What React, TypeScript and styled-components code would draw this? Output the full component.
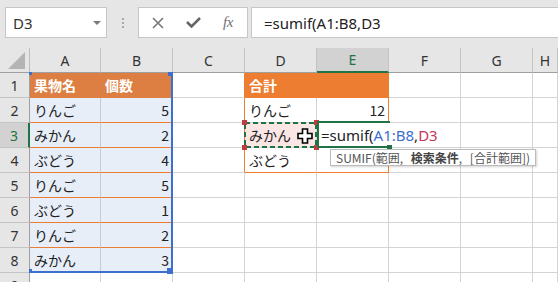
import * as React from 'react'
import styled, {createGlobalStyle} from 'styled-components'

const GREEN = '#217346'
const BLUE = '#3d6fcc'
const RED = '#c23b3f'
const ORANGE = '#ed7d31'
const ORANGE_TINT = '#dd7f42'
const BLUE_TINT = '#e7eef8'
const GRID = '#d4d4d4'
const CHROME = '#e6e6e6'

const GlobalStyle = createGlobalStyle`
  html, body {
    margin: 0;
    padding: 0;
    background: #fff;
  }
  body {
    font-family: 'Noto Sans CJK JP', 'Noto Sans', sans-serif;
  }
`

const Root = styled.div`
  width: 558px;
  height: 282px;
  overflow: hidden;
  background: #fff;
`

// ---- formula bar ----

const Bar = styled.div`
  display: flex;
  align-items: flex-start;
  height: 48px;
  box-sizing: border-box;
  padding: 7px 0 0 5px;
  background: ${CHROME};
`

const NameBox = styled.div`
  display: flex;
  align-items: center;
  justify-content: space-between;
  width: 102px;
  height: 31px;
  box-sizing: border-box;
  padding: 0 5px 0 7px;
  background: #fff;
  border: 1px solid #c6c6c6;
  font: 15px 'Noto Sans', sans-serif;
  color: #333;
`

const Caret = styled.span`
  width: 0;
  height: 0;
  border-left: 4px solid transparent;
  border-right: 4px solid transparent;
  border-top: 4px solid #7a7a7a;
`

const Grip = styled.div`
  display: flex;
  flex-direction: column;
  align-items: center;
  justify-content: center;
  gap: 2px;
  width: 31px;
  height: 31px;

  span {
    width: 2px;
    height: 2px;
    background: #a8a8a8;
  }
`

const Buttons = styled.div`
  display: flex;
  align-items: center;
  gap: 5px;
  width: 110px;
  height: 31px;
  box-sizing: border-box;
  padding-left: 4px;
  background: #fff;
  border: 1px solid #c6c6c6;
`

const IconSlot = styled.span`
  display: flex;
  align-items: center;
  justify-content: center;
  width: 30px;
  height: 29px;
  color: #6e6e6e;
`

const Fx = styled.span`
  font: italic 15px 'Liberation Serif', serif;
  color: #707070;
  letter-spacing: -0.5px;
`

const Input = styled.div`
  flex: 1;
  display: flex;
  align-items: center;
  height: 31px;
  box-sizing: border-box;
  margin-left: 3px;
  padding-left: 12px;
  background: #fff;
  border: 1px solid #c6c6c6;
  border-right: none;
  font: 15px 'Noto Sans', sans-serif;
  color: #222;
`

// ---- sheet ----

const Sheet = styled.div`
  position: relative;
  display: grid;
  grid-template-columns: 30px 71px repeat(6, 72px) 1fr;
  grid-auto-rows: 25px;
`

const Corner = styled.div`
  display: flex;
  align-items: flex-end;
  justify-content: flex-end;
  padding: 0 4px 3px 0;
  background: ${CHROME};
  border-right: 1px solid #bdbdbd;
  border-bottom: 1px solid #9f9f9f;

  &::after {
    content: '';
    border-left: 17px solid transparent;
    border-bottom: 17px solid #b4b4b4;
  }
`

const ColHead = styled.div<{$on?: boolean}>`
  display: flex;
  align-items: center;
  justify-content: center;
  box-sizing: border-box;
  background: ${p => (p.$on ? '#d2d2d2' : CHROME)};
  color: ${p => (p.$on ? GREEN : '#333')};
  border-right: 1px solid #c4c4c4;
  border-bottom: ${p => (p.$on ? `2px solid ${GREEN}` : '1px solid #9f9f9f')};
  font: 14px 'Noto Sans', sans-serif;
`

const RowHead = styled.div<{$on?: boolean}>`
  display: flex;
  align-items: center;
  justify-content: center;
  box-sizing: border-box;
  background: ${p => (p.$on ? '#d2d2d2' : CHROME)};
  color: ${p => (p.$on ? GREEN : '#333')};
  border-right: ${p => (p.$on ? `2px solid ${GREEN}` : '1px solid #9f9f9f')};
  border-bottom: 1px solid #c4c4c4;
  font: 14px 'Noto Sans', sans-serif;
`

const Cell = styled.div<{$fill?: string; $head?: boolean; $num?: boolean; $bb?: string; $br?: string}>`
  display: flex;
  align-items: center;
  justify-content: ${p => (p.$num ? 'flex-end' : 'flex-start')};
  padding: 0 3px 1px 4px;
  box-sizing: border-box;
  overflow: hidden;
  white-space: nowrap;
  background: ${p => p.$fill || '#fff'};
  border-right: 1px solid ${p => p.$br || GRID};
  border-bottom: 1px solid ${p => p.$bb || GRID};
  color: ${p => (p.$head ? '#fff' : '#222')};
  font-weight: ${p => (p.$head ? 700 : 400)};
  font-size: 14px;
`

// ---- overlays ----

const RefRange = styled.div`
  position: absolute;
  left: 29px;
  top: 24px;
  width: 144px;
  height: 201px;
  box-sizing: border-box;
  border-right: 2px solid ${BLUE};
  border-bottom: 2px solid ${BLUE};
  pointer-events: none;
`

const Handle = styled.span<{$c: string; $s: number}>`
  position: absolute;
  width: ${p => p.$s}px;
  height: ${p => p.$s}px;
  background: ${p => p.$c};
`

const Ants = styled.div`
  position: absolute;
  left: 244px;
  top: 74px;
  width: 73px;
  height: 26px;
`

const EditBox = styled.div`
  position: absolute;
  left: 317px;
  top: 73px;
  width: 73px;
  height: 27px;
  box-sizing: border-box;
  display: flex;
  align-items: center;
  padding-left: 2px;
  border-top: 2px solid ${GREEN};
  border-bottom: 2px solid ${GREEN};
  border-left: 2px solid ${GREEN};
  font: 15px 'Noto Sans', sans-serif;
  color: #222;
  white-space: nowrap;
`

const Ref = styled.span<{$c: string}>`
  color: ${p => p.$c};
`

const Cursor = styled.svg`
  position: absolute;
  left: 297px;
  top: 80px;
`

const Tip = styled.div`
  position: absolute;
  left: 330px;
  top: 101px;
  height: 17px;
  box-sizing: border-box;
  padding: 0 5px;
  background: #fff;
  border: 1px solid #bcbcbc;
  box-shadow: 1px 1px 2px rgba(0, 0, 0, 0.18);
  font-size: 12px;
  line-height: 15px;
  color: #555;
  word-spacing: 5px;
  white-space: nowrap;

  b {
    font-weight: 700;
    color: #444;
  }
`

type CellData = {t?: string; fill?: string; head?: boolean; num?: boolean; bb?: string; br?: string}

const cols = ['A', 'B', 'C', 'D', 'E', 'F', 'G', 'H']

const fruits: [string, string][] = [
  ['りんご', '5'],
  ['みかん', '2'],
  ['ぶどう', '4'],
  ['りんご', '5'],
  ['ぶどう', '1'],
  ['りんご', '2'],
  ['みかん', '3'],
]

function buildRows(): CellData[][] {
  const rows: CellData[][] = []
  rows.push([
    {t: '果物名', fill: ORANGE_TINT, head: true, bb: ORANGE_TINT, br: ORANGE_TINT},
    {t: '個数', fill: ORANGE_TINT, head: true, bb: ORANGE_TINT, br: ORANGE_TINT},
    {br: ORANGE},
    {t: '合計', fill: ORANGE, head: true, bb: ORANGE, br: ORANGE},
    {fill: ORANGE, head: true, bb: ORANGE, br: ORANGE},
    {}, {}, {},
  ])
  fruits.forEach(([name, n], i) => {
    const r = i + 2
    const line = r < 8 ? ORANGE : undefined
    const row: CellData[] = [
      {t: name, fill: BLUE_TINT, bb: line, br: '#c7ccd4'},
      {t: n, num: true, fill: BLUE_TINT, bb: line},
      {}, {}, {}, {}, {}, {},
    ]
    if (r <= 4) row[2] = {br: ORANGE}
    if (r === 2) {
      row[3] = {t: 'りんご'}
      row[4] = {t: '12', num: true, br: ORANGE}
    }
    if (r === 3) {
      row[3] = {t: 'みかん', fill: '#fbe6e6'}
      row[4] = {br: '#fff'}
    }
    if (r === 4) {
      row[3] = {t: 'ぶどう', bb: ORANGE}
      row[4] = {bb: ORANGE, br: ORANGE}
    }
    rows.push(row)
  })
  rows.push([{}, {}, {}, {}, {}, {}, {}, {}])
  return rows
}

const rows = buildRows()

export default function App() {
  return (
    <Root>
      <GlobalStyle />
      <Bar>
        <NameBox>
          D3
          <Caret />
        </NameBox>
        <Grip>
          <span />
          <span />
          <span />
        </Grip>
        <Buttons>
          <IconSlot>
            <svg width='12' height='12' viewBox='0 0 12 12'>
              <path d='M1 1 L11 11 M11 1 L1 11' stroke='#777' strokeWidth='1.6' fill='none' />
            </svg>
          </IconSlot>
          <IconSlot>
            <svg width='15' height='11' viewBox='0 0 15 11'>
              <path d='M1 5 L5.5 9.5 L14 1' stroke='#666' strokeWidth='2.6' fill='none' />
            </svg>
          </IconSlot>
          <IconSlot>
            <Fx>fx</Fx>
          </IconSlot>
        </Buttons>
        <Input>=sumif(A1:B8,D3</Input>
      </Bar>

      <Sheet>
        <Corner />
        {cols.map(c => (
          <ColHead key={c} $on={c === 'E'}>{c}</ColHead>
        ))}
        {rows.map((row, ri) => (
          <React.Fragment key={ri}>
            <RowHead $on={ri === 2}>{ri + 1}</RowHead>
            {row.map((c, ci) => (
              <Cell key={ci} $fill={c.fill} $head={c.head} $num={c.num} $bb={c.bb} $br={c.br}>
                {c.t}
              </Cell>
            ))}
          </React.Fragment>
        ))}

        <RefRange>
          <Handle $c={BLUE} $s={3} style={{left: 0, top: 0}} />
          <Handle $c={BLUE} $s={4} style={{right: -1, top: 0}} />
          <Handle $c={BLUE} $s={3} style={{left: 0, bottom: -1}} />
          <Handle $c={BLUE} $s={6} style={{right: -2, bottom: -3}} />
        </RefRange>

        <Ants>
          <svg width='73' height='26' viewBox='0 0 73 26'>
            <rect x='1' y='1' width='71' height='24' fill='none' stroke={GREEN} strokeWidth='2' strokeDasharray='5 3' />
          </svg>
          <Handle $c={RED} $s={5} style={{left: -2, top: -2}} />
          <Handle $c={RED} $s={5} style={{right: -2, top: -2}} />
          <Handle $c={RED} $s={5} style={{left: -2, bottom: -2}} />
          <Handle $c={RED} $s={5} style={{right: -2, bottom: -2}} />
        </Ants>

        <EditBox>
          =sumif(<Ref $c={BLUE}>A1:B8</Ref>,<Ref $c={'#c6365a'}>D3</Ref>
          <Handle $c={GREEN} $s={5} style={{right: -2, bottom: -4}} />
        </EditBox>

        <Cursor width='16' height='16' viewBox='0 0 16 16'>
          <path
            d='M5.5 1 H10.5 V5.5 H15 V10.5 H10.5 V15 H5.5 V10.5 H1 V5.5 H5.5 Z'
            fill='#fff'
            stroke='#000'
            strokeWidth='1.6'
          />
        </Cursor>

        <Tip>
          SUMIF(範囲, <b>検索条件</b>, [合計範囲])
        </Tip>
      </Sheet>
    </Root>
  )
}
